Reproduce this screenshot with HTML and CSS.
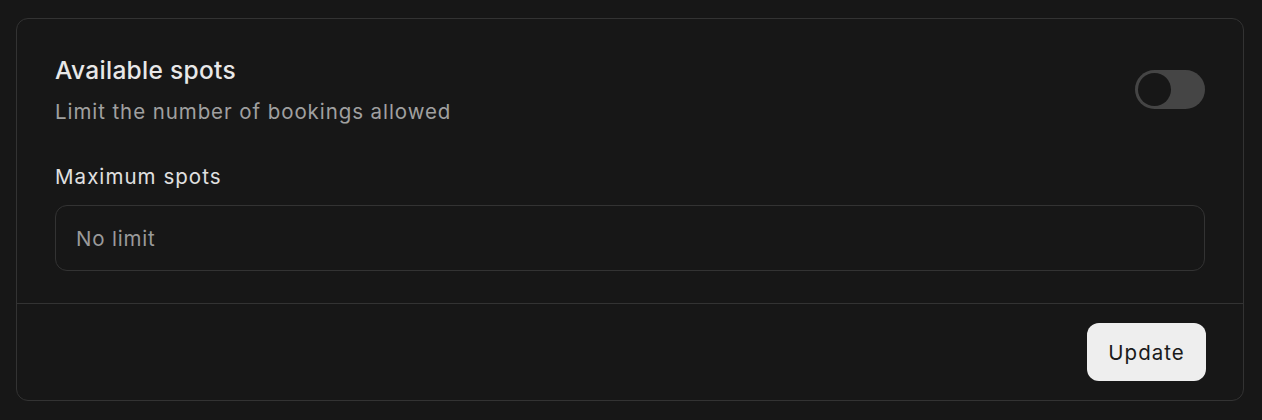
FILE: index.html
```html
<!DOCTYPE html>
<html>
<head>
<meta charset="utf-8">
<link rel="stylesheet" href="styles.css">
</head>
<body>
<div class="card">
  <div class="card-body">
    <div class="header">
      <div class="header-text">
        <h2 class="title">Available spots</h2>
        <p class="subtitle">Limit the number of bookings allowed</p>
      </div>
      <div class="toggle"><span class="knob"></span></div>
    </div>
    <label class="label">Maximum spots</label>
    <div class="input">No limit</div>
  </div>
  <div class="card-footer">
    <button class="btn">Update</button>
  </div>
</div>
</body>
</html>
```
FILE: styles.css
```css
html, body {
  margin: 0;
  padding: 0;
  background: #171717;
}
body {
  font-family: Inter, "Noto Sans", sans-serif;
  padding: 18px 18px 19px 16px;
}
.card {
  border: 1px solid #333333;
  border-radius: 12px;
  background: #171717;
}
.card-body {
  padding: 35px 38px 32px 38px;
}
.header {
  display: flex;
  justify-content: space-between;
  align-items: flex-start;
}
.title {
  margin: 0;
  font-size: 24.5px;
  line-height: 32px;
  font-weight: 500;
  letter-spacing: 0.3px;
  color: #e8e8e8;
}
.subtitle {
  margin: 12px 0 0;
  font-size: 20.5px;
  line-height: 28px;
  letter-spacing: 0.92px;
  color: #a0a0a0;
}
.toggle {
  margin-top: 16px;
  width: 70px;
  height: 39px;
  border-radius: 20px;
  background: #454545;
  box-sizing: border-box;
  padding: 3px;
}
.knob {
  display: block;
  width: 33px;
  height: 33px;
  border-radius: 50%;
  background: #171717;
}
.label {
  display: block;
  margin-top: 37px;
  font-size: 20.5px;
  line-height: 28px;
  letter-spacing: 1.05px;
  color: #e0e0e0;
}
.input {
  margin-top: 14px;
  height: 66px;
  box-sizing: border-box;
  border: 1px solid #333333;
  border-radius: 12px;
  padding: 0 20px;
  display: flex;
  align-items: center;
  font-size: 20.5px;
  letter-spacing: 0.8px;
  color: #9a9a9a;
}
.card-footer {
  border-top: 1px solid #333333;
  padding: 19px 37px 19px;
  display: flex;
  justify-content: flex-end;
}
.btn {
  font-family: Inter, "Noto Sans", sans-serif;
  font-size: 20.5px;
  letter-spacing: 1px;
  color: #1a1a1a;
  background: #eeeeee;
  border: none;
  border-radius: 12px;
  height: 58px;
  width: 119px;
  padding: 0;
}
```
